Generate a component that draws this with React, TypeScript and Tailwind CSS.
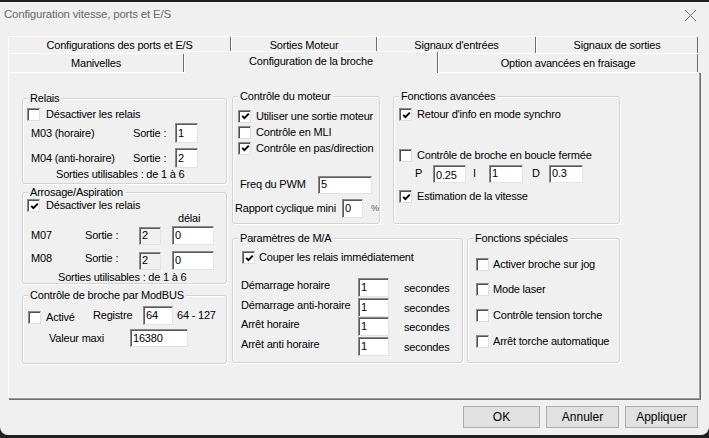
import React from 'react';

interface GroupProps {
  title: string;
  className?: string;
  children?: React.ReactNode;
}

const Group: React.FC<GroupProps> = ({ title, className = '', children }) => (
  <div className={`relative border border-[#d3d3d3] rounded-[3px] shadow-[inset_1px_1px_0_#fff,1px_1px_0_#fff] ${className}`}>
    <span className="absolute -top-[8px] left-[5px] bg-[#f0f0f0] px-[2px] leading-[14px] whitespace-nowrap">{title}</span>
    {children}
  </div>
);

const Check: React.FC<{ checked?: boolean }> = ({ checked }) => (
  <span className="flex items-center justify-center w-[13px] h-[13px] shrink-0 bg-white border border-t-[#8a8a8a] border-l-[#8a8a8a] border-r-[#dedede] border-b-[#dedede] shadow-[inset_1px_1px_0_#505050]">
    {checked && (
      <svg width="9" height="9" viewBox="0 0 9 9" className="ml-[1px] mt-[1px]">
        <polyline points="1.2,3.8 3.4,6.2 7.8,1.6" fill="none" stroke="#000" strokeWidth="1.9" />
      </svg>
    )}
  </span>
);

const Field: React.FC<{ value: string; className?: string; disabled?: boolean }> = ({ value, className = '', disabled }) => (
  <span
    className={`flex items-center shrink-0 pl-[2px] leading-none border border-t-[#8a8a8a] border-l-[#8a8a8a] border-r-[#e3e3e3] border-b-[#e3e3e3] shadow-[inset_1px_1px_0_#5a5a5a] ${
      disabled ? 'bg-[#f0f0f0]' : 'bg-white'
    } ${className}`}
  >
    {value}
  </span>
);

const CheckRow: React.FC<{ checked?: boolean; label: string; className?: string; gap?: string }> = ({
  checked,
  label,
  className = '',
  gap = 'gap-[5px]',
}) => (
  <div className={`flex items-center h-[15px] whitespace-nowrap ${gap} ${className}`}>
    <Check checked={checked} />
    <span>{label}</span>
  </div>
);

const Tab: React.FC<{ label: string; className?: string }> = ({ label, className = '' }) => (
  <div
    className={`flex items-center justify-center shrink-0 bg-[#f0f0f0] border-t border-l border-white border-r border-r-[#6d6d6d] rounded-t-[2px] whitespace-nowrap ${className}`}
  >
    {label}
  </div>
);

const delays = [
  { label: 'Démarrage horaire', mt: 'mt-[13px]' },
  { label: 'Démarrage anti-horaire', mt: 'mt-[1px]' },
  { label: 'Arrêt horaire', mt: 'mt-0' },
  { label: 'Arrêt anti horaire', mt: 'mt-[1px]' },
];

export default function App() {
  return (
    <div className="w-[709px] h-[438px] bg-[#202020] pt-[2px] overflow-hidden font-['Liberation_Sans',Arial,sans-serif] text-[11px] tracking-[-0.2px] text-black">
      <div className="h-[433px] bg-[#f0f0f0] rounded-b-[8px] flex flex-col">
        {/* Title bar */}
        <div className="h-[26px] flex items-center justify-between pl-[4px] pr-[12px]">
          <span className="text-[11.5px] text-[#6a6a6a]">Configuration vitesse, ports et E/S</span>
          <svg width="13" height="13" viewBox="0 0 13 13">
            <path d="M1 1 L12 12 M12 1 L1 12" stroke="#7a7a7a" strokeWidth="1" />
          </svg>
        </div>

        {/* Tabs */}
        <div className="mt-[8px] ml-[8px] w-[690px]">
          <div className="flex h-[17px]">
            <Tab label="Configurations des ports et E/S" className="w-[223px]" />
            <Tab label="Sorties Moteur" className="w-[146px]" />
            <Tab label="Signaux d'entrées" className="w-[159px]" />
            <Tab label="Signaux de sorties" className="w-[162px]" />
          </div>
          <div className="flex h-[19px] items-end">
            <Tab label="Manivelles" className="w-[176px] h-[19px]" />
            <Tab label="Configuration de la broche" className="w-[254px] h-[22px] relative top-[1px] z-10 pb-[2px]" />
            <Tab label="Option avancées en fraisage" className="w-[260px] h-[19px]" />
          </div>
        </div>

        {/* Panel */}
        <div className="ml-[8px] w-[692px] h-[327px] flex border-t border-l border-white border-r border-b border-r-[#a0a0a0] border-b-[#a0a0a0] shadow-[1px_1px_0_#6d6d6d] pl-[13px]">
          {/* Left column */}
          <div className="w-[205px] flex flex-col pt-[25px]">
            <Group title="Relais" className="h-[86px]">
              <div className="flex flex-col pl-[4px]">
                <CheckRow label="Désactiver les relais" className="mt-[8px]" gap="gap-[6px]" />
                <div className="flex items-center h-[20px] mt-[1px]">
                  <span className="w-[106px] pl-[4px]">M03 (horaire)</span>
                  <span className="w-[42px]">Sortie :</span>
                  <Field value="1" className="w-[23px] h-[20px]" />
                </div>
                <div className="flex items-center h-[20px] mt-[5px]">
                  <span className="w-[106px] pl-[4px]">M04 (anti-horaire)</span>
                  <span className="w-[42px]">Sortie :</span>
                  <Field value="2" className="w-[23px] h-[20px]" />
                </div>
                <div className="h-[12px] leading-[12px] ml-[29px]">Sorties utilisables : de 1 à 6</div>
              </div>
            </Group>

            <Group title="Arrosage/Aspiration" className="h-[92px] mt-[8px]">
              <div className="flex flex-col pl-[4px]">
                <CheckRow checked label="Désactiver les relais" className="mt-[5px]" gap="gap-[6px]" />
                <div className="h-[11px] leading-[11px] ml-[151px]">délai</div>
                <div className="flex items-center h-[19px] mt-[2px]">
                  <span className="w-[58px] pl-[4px]">M07</span>
                  <span className="w-[54px]">Sortie :</span>
                  <Field value="2" disabled className="w-[22px] h-[18px]" />
                  <Field value="0" className="w-[42px] h-[19px] ml-[11px]" />
                </div>
                <div className="flex items-center h-[19px] mt-[6px]">
                  <span className="w-[58px] pl-[4px] self-start leading-[14px]">M08</span>
                  <span className="w-[54px] self-start leading-[14px]">Sortie :</span>
                  <Field value="2" disabled className="w-[22px] h-[18px]" />
                  <Field value="0" className="w-[42px] h-[19px] ml-[11px]" />
                </div>
                <div className="h-[12px] leading-[12px] mt-[1px] ml-[31px]">Sorties utilisables : de 1 à 6</div>
              </div>
            </Group>

            <Group title="Contrôle de broche par ModBUS" className="h-[69px] mt-[11px]">
              <div className="flex flex-col pl-[4px]">
                <div className="flex items-center h-[19px] mt-[10px] whitespace-nowrap">
                  <span className="ml-[1px] mr-[5px] mt-[3px]">
                    <Check />
                  </span>
                  <span className="w-[47px] mt-[3px]">Activé</span>
                  <span className="w-[50px]">Registre</span>
                  <Field value="64" className="w-[30px] h-[19px]" />
                  <span className="ml-[4px]">64 - 127</span>
                </div>
                <div className="flex items-center h-[18px] mt-[4px]">
                  <span className="w-[103px] pl-[22px]">Valeur maxi</span>
                  <Field value="16380" className="w-[58px] h-[18px]" />
                </div>
              </div>
            </Group>
          </div>

          {/* Right area */}
          <div className="ml-[5px] flex flex-col pt-[23px]">
            <div className="flex">
              <Group title="Contrôle du moteur" className="w-[148px] h-[128px]">
                <div className="flex flex-col pl-[5px]">
                  <div className="mt-[11px]" />
                  <CheckRow checked label="Utiliser une sortie moteur" className="h-[16px]" />
                  <CheckRow label="Contrôle en MLI" className="h-[16px]" />
                  <CheckRow checked label="Contrôle en pas/direction" className="h-[16px]" />
                  <div className="flex items-center h-[19px] mt-[19px]">
                    <span className="w-[80px] pl-[2px]">Freq du PWM</span>
                    <Field value="5" className="w-[54px] h-[18px]" />
                  </div>
                  <div className="flex items-center h-[19px] mt-[5px] -ml-[3px] whitespace-nowrap">
                    <span className="w-[107px]">Rapport cyclique mini</span>
                    <Field value="0" className="w-[21px] h-[19px]" />
                    <span className="ml-[8px] text-[9px] text-[#555]">%</span>
                  </div>
                </div>
              </Group>

              <Group title="Fonctions avancées" className="w-[227px] h-[128px] ml-[13px]">
                <div className="flex flex-col pl-[5px]">
                  <CheckRow checked label="Retour d'info en mode synchro" className="mt-[10px]" />
                  <CheckRow label="Contrôle de broche en boucle fermée" className="mt-[26px]" />
                  <div className="flex items-center h-[19px] mt-[1px]">
                    <span className="ml-[16px] w-[18px]">P</span>
                    <Field value="0.25" className="w-[33px] h-[18px] items-end pb-[1px]" />
                    <span className="ml-[7px] w-[16px]">I</span>
                    <Field value="1" className="w-[34px] h-[18px] items-start pt-[2px]" />
                    <span className="ml-[9px] w-[17px]">D</span>
                    <Field value="0.3" className="w-[34px] h-[18px] items-start pt-[2px]" />
                  </div>
                  <CheckRow checked label="Estimation de la vitesse" className="mt-[6px]" />
                </div>
              </Group>
            </div>

            <div className="flex mt-[14px]">
              <Group title="Paramètres de M/A" className="w-[231px] h-[125px]">
                <div className="flex flex-col pl-[8px]">
                  <CheckRow checked label="Couper les relais immédiatement" className="mt-[11px] ml-[1px]" gap="gap-[4px]" />
                  {delays.map((d) => (
                    <div key={d.label} className={`flex h-[19px] whitespace-nowrap ${d.mt}`}>
                      <span className="w-[117px] leading-[14px]">{d.label}</span>
                      <Field value="1" className="w-[31px] h-[19px]" />
                      <span className="ml-[15px] pt-[3px] leading-[14px]">secondes</span>
                    </div>
                  ))}
                </div>
              </Group>

              <Group title="Fonctions spéciales" className="w-[153px] h-[125px] ml-[4px]">
                <div className="flex flex-col pl-[8px]">
                  <CheckRow label="Activer broche sur jog" className="mt-[18px]" gap="gap-[4px]" />
                  <CheckRow label="Mode laser" className="mt-[10px]" gap="gap-[4px]" />
                  <CheckRow label="Contrôle tension torche" className="mt-[11px]" gap="gap-[4px]" />
                  <CheckRow label="Arrêt torche automatique" className="mt-[11px]" gap="gap-[4px]" />
                </div>
              </Group>
            </div>
          </div>
        </div>

        {/* Buttons */}
        <div className="flex justify-end gap-[6px] pr-[11px] mt-[7px] text-[12px] tracking-normal">
          <button className="w-[77px] h-[22px] bg-[#e1e1e1] border border-[#adadad]">OK</button>
          <button className="w-[73px] h-[22px] bg-[#e1e1e1] border border-[#adadad]">Annuler</button>
          <button className="w-[73px] h-[22px] bg-[#e1e1e1] border border-[#adadad]">Appliquer</button>
        </div>
      </div>
    </div>
  );
}
